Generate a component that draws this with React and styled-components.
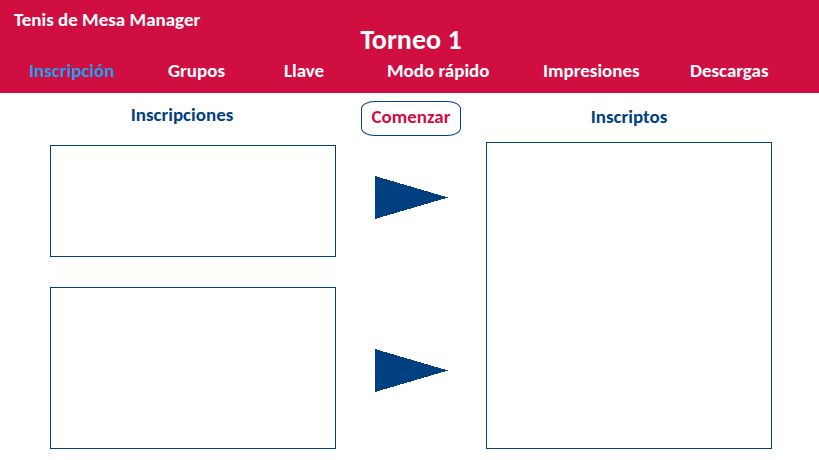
import React from "react";
import styled, { createGlobalStyle } from "styled-components";

const crimson = "#d00e41";
const navy = "#004080";
const sky = "#1c9fea";

const GlobalStyle = createGlobalStyle`
  *, *::before, *::after { box-sizing: border-box; }
  body {
    margin: 0;
    background: #ffffff;
    font-family: Carlito, Lato, sans-serif;
    font-size: 19px;
    font-weight: 700;
    line-height: 20px;
  }
`;

const Header = styled.header`
  padding: 10px 0 12px;
  background: ${crimson};
  color: #ffffff;
`;

const Brand = styled.div`
  padding-left: 14px;
`;

const Title = styled.h1`
  margin: 0 0 11px;
  padding: 0 47px 0 50px;
  font-size: 28px;
  line-height: 20px;
  text-align: center;
`;

const Nav = styled.nav`
  display: grid;
  grid-template-columns: 139fr 116fr 103fr 156fr 147fr 80fr;
  padding: 0 49px 0 29px;
`;

const NavLink = styled.a`
  color: ${(p) => (p.$active ? sky : "#ffffff")};
  text-decoration: none;
  white-space: nowrap;
`;

const Main = styled.main`
  display: grid;
  grid-template-columns: minmax(0, 1fr) 150px minmax(0, 1fr);
  padding: 0 47px 11px 50px;
`;

const Column = styled.section`
  display: flex;
  flex-direction: column;
`;

const Heading = styled.h2`
  margin: 0;
  padding: ${(p) => p.$padding};
  color: ${navy};
  font-size: 19px;
  line-height: 20px;
  text-align: center;
`;

const Panels = styled.div`
  display: flex;
  flex: 1;
  flex-direction: column;
  gap: 30px;
`;

const Panel = styled.div`
  flex: 1 0 auto;
  min-height: ${(p) => p.$minHeight}px;
  border: 1px solid ${navy};
`;

const Actions = styled.div`
  display: flex;
  flex-direction: column;
  align-items: center;
  padding-top: 8px;
`;

const StartButton = styled.button`
  padding: 5px 10px 8px;
  border: 1px solid ${navy};
  border-radius: 14px / 8px;
  background: #ffffff;
  color: ${crimson};
  font: inherit;
  cursor: pointer;
`;

const Arrows = styled.div`
  display: flex;
  flex-direction: column;
  gap: 130px;
  padding-top: 40px;
`;

const ArrowButton = styled.button`
  display: block;
  padding: 0;
  border: 0;
  background: none;
  cursor: pointer;

  svg { display: block; }
`;

const links = ["Inscripción", "Grupos", "Llave", "Modo rápido", "Impresiones", "Descargas"];

function Arrow({ label }) {
  return (
    <ArrowButton type="button" aria-label={label}>
      <svg width="73" height="43" viewBox="0 0 73 43" fill={navy} shapeRendering="crispEdges" aria-hidden="true">
        <path d="M0 0 L73 21.5 L0 43 Z" />
      </svg>
    </ArrowButton>
  );
}

export default function App() {
  return (
    <>
      <GlobalStyle />
      <Header>
        <Brand>Tenis de Mesa Manager</Brand>
        <Title>Torneo 1</Title>
        <Nav aria-label="Secciones">
          {links.map((name, i) => (
            <NavLink key={name} href="#" $active={i === 0} aria-current={i === 0 ? "page" : undefined}>
              {name}
            </NavLink>
          ))}
        </Nav>
      </Header>
      <Main>
        <Column>
          <Heading $padding="12px 22px 20px 0">Inscripciones</Heading>
          <Panels>
            <Panel $minHeight={112} />
            <Panel $minHeight={162} />
          </Panels>
        </Column>
        <Actions>
          <StartButton type="button">Comenzar</StartButton>
          <Arrows>
            <Arrow label="Inscribir selección" />
            <Arrow label="Inscribir nuevo" />
          </Arrows>
        </Actions>
        <Column>
          <Heading $padding="14px 0 15px">Inscriptos</Heading>
          <Panels>
            <Panel $minHeight={307} />
          </Panels>
        </Column>
      </Main>
    </>
  );
}
